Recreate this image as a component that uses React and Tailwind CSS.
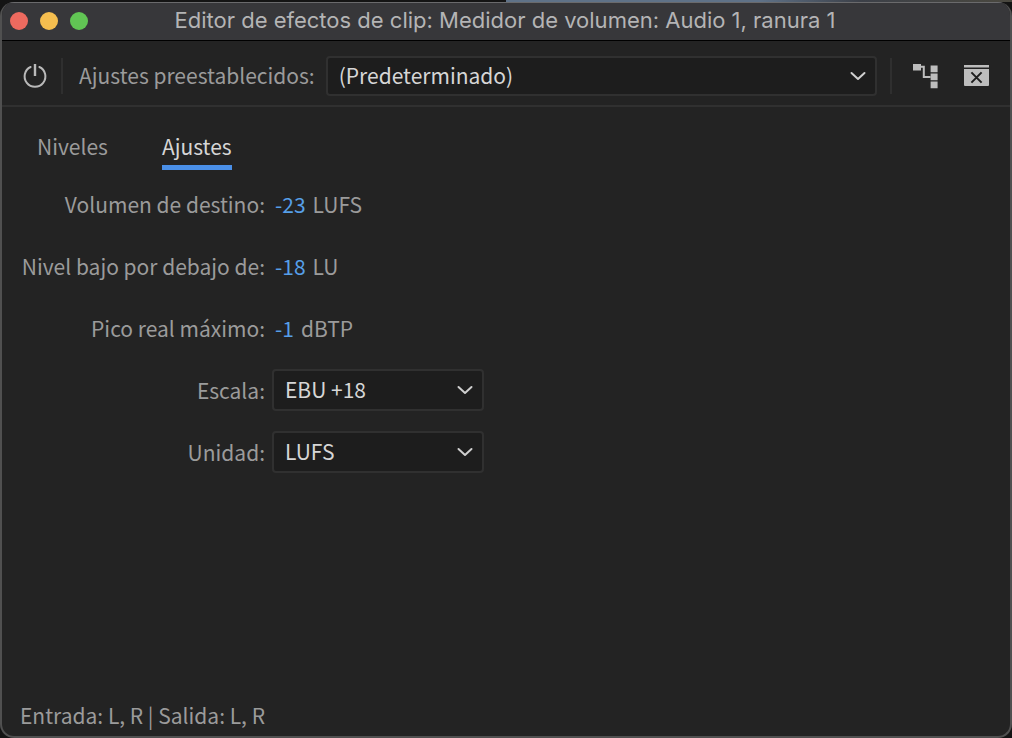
import React, { useState } from "react";

function Chevron() {
  return (
    <svg
      viewBox="0 0 16 10"
      className="pointer-events-none absolute right-[11px] top-1/2 h-[10px] w-[16px] -translate-y-1/2 text-[#cfcfcf]"
      fill="none"
      stroke="currentColor"
      strokeWidth="2"
      strokeLinecap="round"
      strokeLinejoin="round"
      aria-hidden="true"
    >
      <path d="M1.5 2 L8 8 L14.5 2" />
    </svg>
  );
}

function Dropdown({ id, options, className }) {
  return (
    <div className={`relative ${className}`}>
      <select
        id={id}
        className="h-full w-full appearance-none rounded-[4px] border-2 border-[#303030] bg-[#1d1d1d] pb-[2px] pl-[11px] pr-9 text-[#d6d6d6] outline-none"
      >
        {options.map((o) => (
          <option key={o}>{o}</option>
        ))}
      </select>
      <Chevron />
    </div>
  );
}

function ValueRow({ id, label, value, unit }) {
  return (
    <>
      <label htmlFor={id} className="text-right">
        {label}
      </label>
      <div className="flex items-center gap-[7px] pl-[3px]">
        <input
          id={id}
          type="text"
          defaultValue={value}
          className="field-sizing-content bg-transparent text-[#569fe8] outline-none"
        />
        <span>{unit}</span>
      </div>
    </>
  );
}

function SelectRow({ id, label, options }) {
  return (
    <>
      <label htmlFor={id} className="text-right">
        {label}
      </label>
      <Dropdown id={id} options={options} className="h-[42px] w-[212px]" />
    </>
  );
}

function TitleBar() {
  return (
    <header className="flex h-[39px] shrink-0 items-center border-b border-t border-b-black border-t-[#6a6a6c] bg-[#37373a] px-2 pb-[2px]">
      <div className="flex w-[88px] gap-[12px]">
        <button aria-label="Cerrar" className="size-[18px] rounded-full bg-[#ed6a5f]" />
        <button aria-label="Minimizar" className="size-[18px] rounded-full bg-[#f5be4f]" />
        <button aria-label="Ampliar" className="size-[18px] rounded-full bg-[#61c554]" />
      </div>
      <h1 className="flex-1 whitespace-nowrap pb-[2px] text-center font-['Inter',sans-serif] text-[22px] leading-6 text-[#b4b4b5]">
        Editor de efectos de clip: Medidor de volumen: Audio 1, ranura 1
      </h1>
      <div className="w-[90px]" />
    </header>
  );
}

function Toolbar() {
  return (
    <div className="flex h-[66px] shrink-0 items-center border-b-2 border-[#303030] pl-5 pr-5 pt-[6px]">
      <button aria-label="Activar efecto" className="text-[#b9b9b9]">
        <svg viewBox="0 0 26 26" className="size-[26px]" fill="none" stroke="currentColor" strokeWidth="2" aria-hidden="true">
          <path d="M8.6 4 A10.4 10.4 0 1 0 17.4 4" strokeLinecap="round" />
          <path d="M13 1 V13" strokeWidth="2.4" />
        </svg>
      </button>
      <div className="ml-[13px] h-9 w-[2px] bg-[#2f2f2f]" />
      <label htmlFor="preset" className="ml-4 whitespace-nowrap pb-[3px]">
        Ajustes preestablecidos:
      </label>
      <Dropdown id="preset" options={["(Predeterminado)"]} className="ml-[11px] h-10 flex-1" />
      <div className="ml-[13px] h-9 w-[2px] bg-[#2f2f2f]" />
      <button aria-label="Enrutamiento" className="ml-[21px] text-[#bdbdbd]">
        <svg viewBox="0 0 26 26" className="size-[26px]" fill="currentColor" aria-hidden="true">
          <path d="M0 1 H8 V7.6 H0 Z" />
          <path d="M17.6 2.6 H24.6 V9.2 H17.6 Z" />
          <path d="M17.6 10.6 H24.6 V17.2 H17.6 Z" />
          <path d="M17.6 18.6 H24.6 V25.2 H17.6 Z" />
          <path d="M8 3.8 H10.8 V14 H17.6" fill="none" stroke="currentColor" strokeWidth="2" />
        </svg>
      </button>
      <button aria-label="Cerrar panel" className="ml-[25px] text-[#bdbdbd]">
        <svg viewBox="0 0 26 26" className="size-[26px]" fill="currentColor" aria-hidden="true">
          <path d="M0 2 H25 V4.6 H0 Z" />
          <path d="M0 6 H25 V22 Q25 23 24 23 H1 Q0 23 0 22 Z" />
          <path d="M7.4 9.4 L17.6 19.6 M17.6 9.4 L7.4 19.6" stroke="#1d1d1d" strokeWidth="2" />
        </svg>
      </button>
    </div>
  );
}

function Tabs() {
  const [active, setActive] = useState("Ajustes");
  return (
    <div role="tablist" className="flex gap-[54px] px-[35px] pt-6">
      {["Niveles", "Ajustes"].map((t) => (
        <button
          key={t}
          role="tab"
          aria-selected={active === t}
          onClick={() => setActive(t)}
          className={
            active === t
              ? "border-b-[5px] border-[#4a8fe7] pb-1 text-[#d6d6d6]"
              : "border-b-[5px] border-transparent pb-1"
          }
        >
          {t}
        </button>
      ))}
    </div>
  );
}

export default function App() {
  return (
    <div className="flex min-h-screen flex-col bg-[#141414] bg-[linear-gradient(90deg,#141414_50%,#5f7288_50%,#5f7288_75%,#3c4048_85%,#4a483f_100%)] bg-[length:100%_2px] bg-no-repeat pt-[2px] font-['Noto_Sans_CJK_SC',sans-serif] text-[21px] leading-[30px] text-[#9b9b9b]">
      <div className="flex flex-1 flex-col overflow-hidden rounded-[14px] border-x-2 border-b-2 border-[#505050] bg-[#232323]">
        <TitleBar />
        <Toolbar />
        <main className="flex-1">
          <Tabs />
          <div className="grid auto-rows-[62px] grid-cols-[263px_auto] items-center gap-x-[7px] pt-[3px]">
            <ValueRow id="target" label="Volumen de destino:" value="-23" unit="LUFS" />
            <ValueRow id="low" label="Nivel bajo por debajo de:" value="-18" unit="LU" />
            <ValueRow id="peak" label="Pico real máximo:" value="-1" unit="dBTP" />
            <SelectRow id="scale" label="Escala:" options={["EBU +18"]} />
            <SelectRow id="unit" label="Unidad:" options={["LUFS"]} />
          </div>
        </main>
        <footer className="px-[18px] pb-[6px]">Entrada: L, R | Salida: L, R</footer>
      </div>
    </div>
  );
}
